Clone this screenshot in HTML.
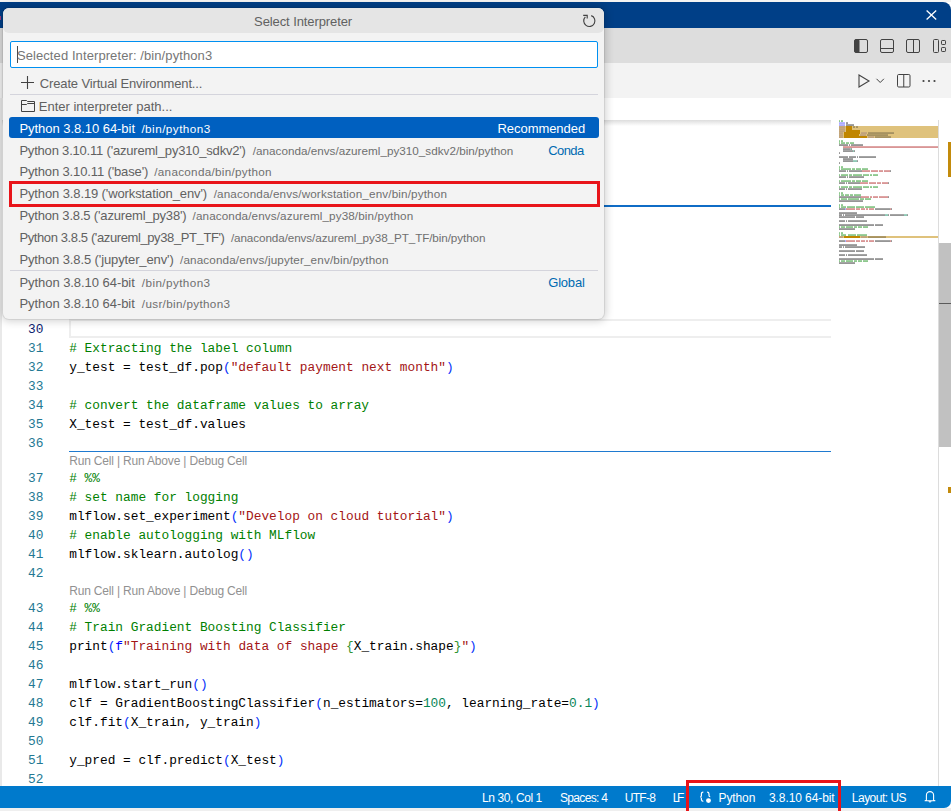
<!DOCTYPE html><html><head><meta charset='utf-8'><style>
*{margin:0;padding:0;box-sizing:border-box}
html,body{width:951px;height:811px;overflow:hidden;background:#ffffff;position:relative;font-family:"Liberation Sans",sans-serif}
.a{position:absolute}
.t{position:absolute;white-space:pre;font-family:"Liberation Sans",sans-serif}
.ln{position:absolute;font-family:"Liberation Mono",monospace;font-size:12.82px;line-height:19px;white-space:pre}
.code{position:absolute;left:69.2px;font-family:"Liberation Mono",monospace;font-size:12.82px;line-height:19px;white-space:pre;color:#000}
svg{position:absolute;overflow:visible}
</style></head><body><div class="a" style="left:0;top:0;width:951px;height:2px;background:#f4f3f2"></div>
<div class="a" style="left:0;top:2px;width:951px;height:26px;background:#003f87;border-top-right-radius:8px"></div>
<div class="a" style="left:0;top:16px;width:1px;height:4px;background:#a04080"></div>
<div class="a" style="left:0;top:28px;width:951px;height:35px;background:#dddddd"></div>
<div class="a" style="left:0;top:63px;width:951px;height:35px;background:#f3f3f3"></div>
<div class="a" style="left:0;top:98px;width:951px;height:22px;background:#ffffff"></div>
<div class="a" style="left:0;top:120px;width:831px;height:6px;background:linear-gradient(#dddddd,rgba(255,255,255,0))"></div>
<div class="a" style="left:0;top:98px;width:1.5px;height:688px;background:#e9e9e9"></div>
<div class="a" style="left:69px;top:319px;width:762px;height:19px;border:2px solid #eeeeee;border-right:0"></div>
<div class="a" style="left:69px;top:205px;width:762px;height:2px;background:#0f6cc6"></div>
<div class="a" style="left:69px;top:451px;width:762px;height:1px;background:#1f7ad0"></div>
<div class="ln" style="top:320px;left:28.02px;color:#0b216f">30</div>
<div class="ln" style="top:339px;left:28.02px;color:#237893">31</div>
<div class="code" style="top:339px"><span style="color:#008000"># Extracting the label column</span></div>
<div class="ln" style="top:358px;left:28.02px;color:#237893">32</div>
<div class="code" style="top:358px"><span style="color:#000000">y_test = test_df.pop</span><span style="color:#0431fa">(</span><span style="color:#a31515">&quot;default payment next month&quot;</span><span style="color:#0431fa">)</span></div>
<div class="ln" style="top:377px;left:28.02px;color:#237893">33</div>
<div class="ln" style="top:396px;left:28.02px;color:#237893">34</div>
<div class="code" style="top:396px"><span style="color:#008000"># convert the dataframe values to array</span></div>
<div class="ln" style="top:415px;left:28.02px;color:#237893">35</div>
<div class="code" style="top:415px"><span style="color:#000000">X_test = test_df.values</span></div>
<div class="ln" style="top:434px;left:28.02px;color:#237893">36</div>
<div class="ln" style="top:469px;left:28.02px;color:#237893">37</div>
<div class="code" style="top:469px"><span style="color:#008000"># %%</span></div>
<div class="ln" style="top:488px;left:28.02px;color:#237893">38</div>
<div class="code" style="top:488px"><span style="color:#008000"># set name for logging</span></div>
<div class="ln" style="top:507px;left:28.02px;color:#237893">39</div>
<div class="code" style="top:507px"><span style="color:#000000">mlflow.set_experiment</span><span style="color:#0431fa">(</span><span style="color:#a31515">&quot;Develop on cloud tutorial&quot;</span><span style="color:#0431fa">)</span></div>
<div class="ln" style="top:526px;left:28.02px;color:#237893">40</div>
<div class="code" style="top:526px"><span style="color:#008000"># enable autologging with MLflow</span></div>
<div class="ln" style="top:545px;left:28.02px;color:#237893">41</div>
<div class="code" style="top:545px"><span style="color:#000000">mlflow.sklearn.autolog</span><span style="color:#0431fa">()</span></div>
<div class="ln" style="top:564px;left:28.02px;color:#237893">42</div>
<div class="ln" style="top:599px;left:28.02px;color:#237893">43</div>
<div class="code" style="top:599px"><span style="color:#008000"># %%</span></div>
<div class="ln" style="top:618px;left:28.02px;color:#237893">44</div>
<div class="code" style="top:618px"><span style="color:#008000"># Train Gradient Boosting Classifier</span></div>
<div class="ln" style="top:637px;left:28.02px;color:#237893">45</div>
<div class="code" style="top:637px"><span style="color:#000000">print</span><span style="color:#0431fa">(</span><span style="color:#0000ff">f</span><span style="color:#a31515">&quot;Training with data of shape </span><span style="color:#319331">{</span><span style="color:#000000">X_train.shape</span><span style="color:#319331">}</span><span style="color:#a31515">&quot;</span><span style="color:#0431fa">)</span></div>
<div class="ln" style="top:656px;left:28.02px;color:#237893">46</div>
<div class="ln" style="top:675px;left:28.02px;color:#237893">47</div>
<div class="code" style="top:675px"><span style="color:#000000">mlflow.start_run</span><span style="color:#0431fa">()</span></div>
<div class="ln" style="top:694px;left:28.02px;color:#237893">48</div>
<div class="code" style="top:694px"><span style="color:#000000">clf = GradientBoostingClassifier</span><span style="color:#0431fa">(</span><span style="color:#000000">n_estimators=</span><span style="color:#098658">100</span><span style="color:#000000">, learning_rate=</span><span style="color:#098658">0.1</span><span style="color:#0431fa">)</span></div>
<div class="ln" style="top:713px;left:28.02px;color:#237893">49</div>
<div class="code" style="top:713px"><span style="color:#000000">clf.fit</span><span style="color:#0431fa">(</span><span style="color:#000000">X_train, y_train</span><span style="color:#0431fa">)</span></div>
<div class="ln" style="top:732px;left:28.02px;color:#237893">50</div>
<div class="ln" style="top:751px;left:28.02px;color:#237893">51</div>
<div class="code" style="top:751px"><span style="color:#000000">y_pred = clf.predict</span><span style="color:#0431fa">(</span><span style="color:#000000">X_test</span><span style="color:#0431fa">)</span></div>
<div class="ln" style="top:770px;left:28.02px;color:#237893">52</div>
<svg class="mm" width="951" height="811" viewBox="0 0 951 811" style="position:absolute;left:0;top:0"><rect x="839" y="126" width="99" height="2" fill="#dfc27c"/><rect x="839" y="128" width="99" height="2" fill="#dfc27c"/><rect x="839" y="130" width="99" height="2" fill="#dfc27c"/><rect x="839" y="132" width="99" height="2" fill="#dfc27c"/><rect x="839" y="134" width="99" height="2" fill="#dfc27c"/><rect x="839" y="136" width="99" height="2" fill="#dfc27c"/><rect x="839" y="236" width="99" height="2" fill="#dfc27c"/><rect x="839" y="120.45" width="1" height="1.2" fill="#108a10" opacity="0.72"/><rect x="841" y="120.45" width="2" height="1.2" fill="#108a10" opacity="0.72"/><rect x="839" y="122.45" width="6" height="1.2" fill="#5050ff" opacity="0.72"/><rect x="846" y="122.45" width="2" height="1.2" fill="#202020" opacity="0.72"/><rect x="839" y="124.45" width="6" height="1.2" fill="#5050ff" opacity="0.72"/><rect x="846" y="124.45" width="8" height="1.2" fill="#202020" opacity="0.72"/><rect x="839" y="126.45" width="6" height="1.2" fill="#7a5a7a" opacity="0.45"/><rect x="846" y="126" width="6" height="2" fill="#c08600"/><rect x="853" y="126.45" width="2" height="1.2" fill="#202020" opacity="0.45"/><rect x="856" y="126.45" width="2" height="1.2" fill="#202020" opacity="0.45"/><rect x="839" y="128.45" width="6" height="1.2" fill="#7a5a7a" opacity="0.45"/><rect x="846" y="128" width="6" height="2" fill="#c08600"/><rect x="839" y="130.45" width="6" height="1.2" fill="#7a5a7a" opacity="0.45"/><rect x="846" y="130" width="14" height="2" fill="#c08600"/><rect x="839" y="132.45" width="4" height="1.2" fill="#7a5a7a" opacity="0.45"/><rect x="844" y="132" width="16" height="2" fill="#c08600"/><rect x="861" y="132.45" width="6" height="1.2" fill="#7a5a7a" opacity="0.45"/><rect x="868" y="132.45" width="26" height="1.2" fill="#202020" opacity="0.45"/><rect x="839" y="134.45" width="4" height="1.2" fill="#7a5a7a" opacity="0.45"/><rect x="844" y="134" width="15" height="2" fill="#c08600"/><rect x="860" y="134.45" width="6" height="1.2" fill="#7a5a7a" opacity="0.45"/><rect x="867" y="134.45" width="21" height="1.2" fill="#202020" opacity="0.45"/><rect x="839" y="136.45" width="4" height="1.2" fill="#7a5a7a" opacity="0.45"/><rect x="844" y="136" width="23" height="2" fill="#c08600"/><rect x="868" y="136.45" width="6" height="1.2" fill="#7a5a7a" opacity="0.45"/><rect x="875" y="136.45" width="16" height="1.2" fill="#202020" opacity="0.45"/><rect x="839" y="140.45" width="1" height="1.2" fill="#108a10" opacity="0.72"/><rect x="841" y="140.45" width="2" height="1.2" fill="#108a10" opacity="0.72"/><rect x="839" y="142.45" width="1" height="1.2" fill="#108a10" opacity="0.72"/><rect x="841" y="142.45" width="4" height="1.2" fill="#108a10" opacity="0.72"/><rect x="846" y="142.45" width="3" height="1.2" fill="#108a10" opacity="0.72"/><rect x="850" y="142.45" width="4" height="1.2" fill="#108a10" opacity="0.72"/><rect x="839" y="144.45" width="9" height="1.2" fill="#202020" opacity="0.72"/><rect x="849" y="144.45" width="1" height="1.2" fill="#202020" opacity="0.72"/><rect x="851" y="144.45" width="12" height="1.2" fill="#202020" opacity="0.72"/><rect x="843" y="146.45" width="95" height="1.2" fill="#b02020" opacity="0.72"/><rect x="843" y="148.45" width="7" height="1.2" fill="#202020" opacity="0.72"/><rect x="850" y="148.45" width="1" height="1.2" fill="#108a60" opacity="0.72"/><rect x="851" y="148.45" width="1" height="1.2" fill="#202020" opacity="0.72"/><rect x="843" y="150.45" width="10" height="1.2" fill="#202020" opacity="0.72"/><rect x="853" y="150.45" width="1" height="1.2" fill="#108a60" opacity="0.72"/><rect x="854" y="150.45" width="1" height="1.2" fill="#202020" opacity="0.72"/><rect x="839" y="152.45" width="1" height="1.2" fill="#202020" opacity="0.72"/><rect x="839" y="156.45" width="9" height="1.2" fill="#202020" opacity="0.72"/><rect x="849" y="156.45" width="7" height="1.2" fill="#202020" opacity="0.72"/><rect x="857" y="156.45" width="1" height="1.2" fill="#202020" opacity="0.72"/><rect x="859" y="156.45" width="17" height="1.2" fill="#202020" opacity="0.72"/><rect x="843" y="158.45" width="10" height="1.2" fill="#202020" opacity="0.72"/><rect x="843" y="160.45" width="10" height="1.2" fill="#202020" opacity="0.72"/><rect x="853" y="160.45" width="4" height="1.2" fill="#108a60" opacity="0.72"/><rect x="857" y="160.45" width="1" height="1.2" fill="#202020" opacity="0.72"/><rect x="839" y="162.45" width="1" height="1.2" fill="#202020" opacity="0.72"/><rect x="839" y="166.45" width="1" height="1.2" fill="#108a10" opacity="0.72"/><rect x="841" y="166.45" width="2" height="1.2" fill="#108a10" opacity="0.72"/><rect x="839" y="168.45" width="1" height="1.2" fill="#108a10" opacity="0.72"/><rect x="841" y="168.45" width="10" height="1.2" fill="#108a10" opacity="0.72"/><rect x="852" y="168.45" width="3" height="1.2" fill="#108a10" opacity="0.72"/><rect x="856" y="168.45" width="5" height="1.2" fill="#108a10" opacity="0.72"/><rect x="862" y="168.45" width="6" height="1.2" fill="#108a10" opacity="0.72"/><rect x="839" y="170.45" width="7" height="1.2" fill="#202020" opacity="0.72"/><rect x="847" y="170.45" width="1" height="1.2" fill="#202020" opacity="0.72"/><rect x="849" y="170.45" width="13" height="1.2" fill="#202020" opacity="0.72"/><rect x="862" y="170.45" width="8" height="1.2" fill="#b02020" opacity="0.72"/><rect x="871" y="170.45" width="7" height="1.2" fill="#b02020" opacity="0.72"/><rect x="879" y="170.45" width="4" height="1.2" fill="#b02020" opacity="0.72"/><rect x="884" y="170.45" width="6" height="1.2" fill="#b02020" opacity="0.72"/><rect x="890" y="170.45" width="1" height="1.2" fill="#202020" opacity="0.72"/><rect x="839" y="174.45" width="1" height="1.2" fill="#108a10" opacity="0.72"/><rect x="841" y="174.45" width="7" height="1.2" fill="#108a10" opacity="0.72"/><rect x="849" y="174.45" width="3" height="1.2" fill="#108a10" opacity="0.72"/><rect x="853" y="174.45" width="9" height="1.2" fill="#108a10" opacity="0.72"/><rect x="863" y="174.45" width="6" height="1.2" fill="#108a10" opacity="0.72"/><rect x="870" y="174.45" width="2" height="1.2" fill="#108a10" opacity="0.72"/><rect x="873" y="174.45" width="5" height="1.2" fill="#108a10" opacity="0.72"/><rect x="839" y="176.45" width="7" height="1.2" fill="#202020" opacity="0.72"/><rect x="847" y="176.45" width="1" height="1.2" fill="#202020" opacity="0.72"/><rect x="849" y="176.45" width="15" height="1.2" fill="#202020" opacity="0.72"/><rect x="839" y="224.45" width="35" height="1.2" fill="#202020" opacity="0.72"/><rect x="875" y="224.45" width="8" height="1.2" fill="#202020" opacity="0.72"/><rect x="839" y="226.45" width="1" height="1.2" fill="#108a10" opacity="0.72"/><rect x="841" y="226.45" width="4" height="1.2" fill="#108a10" opacity="0.72"/><rect x="846" y="226.45" width="7" height="1.2" fill="#108a10" opacity="0.72"/><rect x="854" y="226.45" width="3" height="1.2" fill="#108a10" opacity="0.72"/><rect x="858" y="226.45" width="4" height="1.2" fill="#108a10" opacity="0.72"/><rect x="863" y="226.45" width="5" height="1.2" fill="#108a10" opacity="0.72"/><rect x="839" y="228.45" width="16" height="1.2" fill="#202020" opacity="0.72"/><rect x="839" y="232.45" width="1" height="1.2" fill="#108a10" opacity="0.72"/><rect x="841" y="232.45" width="2" height="1.2" fill="#108a10" opacity="0.72"/><rect x="839" y="234.45" width="1" height="1.2" fill="#108a10" opacity="0.72"/><rect x="841" y="234.45" width="5" height="1.2" fill="#108a10" opacity="0.72"/><rect x="848" y="234.45" width="8" height="1.2" fill="#108a10" opacity="0.72"/><rect x="857" y="234.45" width="10" height="1.2" fill="#108a10" opacity="0.72"/><rect x="839" y="236.45" width="4" height="1.2" fill="#7a5a7a" opacity="0.45"/><rect x="844" y="236" width="16" height="2" fill="#c08600"/><rect x="861" y="236.45" width="6" height="1.2" fill="#7a5a7a" opacity="0.45"/><rect x="868" y="236.45" width="18" height="1.2" fill="#202020" opacity="0.45"/><rect x="839" y="240.45" width="6" height="1.2" fill="#202020" opacity="0.72"/><rect x="845" y="240.45" width="1" height="1.2" fill="#5050ff" opacity="0.72"/><rect x="846" y="240.45" width="9" height="1.2" fill="#b02020" opacity="0.72"/><rect x="856" y="240.45" width="4" height="1.2" fill="#b02020" opacity="0.72"/><rect x="861" y="240.45" width="4" height="1.2" fill="#b02020" opacity="0.72"/><rect x="866" y="240.45" width="2" height="1.2" fill="#b02020" opacity="0.72"/><rect x="869" y="240.45" width="5" height="1.2" fill="#b02020" opacity="0.72"/><rect x="875" y="240.45" width="15" height="1.2" fill="#202020" opacity="0.72"/><rect x="890" y="240.45" width="1" height="1.2" fill="#b02020" opacity="0.72"/><rect x="891" y="240.45" width="1" height="1.2" fill="#202020" opacity="0.72"/><rect x="839" y="244.45" width="18" height="1.2" fill="#202020" opacity="0.72"/><rect x="839" y="246.45" width="3" height="1.2" fill="#202020" opacity="0.72"/><rect x="843" y="246.45" width="1" height="1.2" fill="#202020" opacity="0.72"/><rect x="845" y="246.45" width="20" height="1.2" fill="#202020" opacity="0.72"/><rect x="839" y="250.45" width="16" height="1.2" fill="#202020" opacity="0.72"/><rect x="856" y="250.45" width="8" height="1.2" fill="#202020" opacity="0.72"/><rect x="839" y="254.45" width="6" height="1.2" fill="#202020" opacity="0.72"/><rect x="846" y="254.45" width="1" height="1.2" fill="#202020" opacity="0.72"/><rect x="848" y="254.45" width="19" height="1.2" fill="#202020" opacity="0.72"/><rect x="839" y="258.45" width="35" height="1.2" fill="#202020" opacity="0.72"/><rect x="875" y="258.45" width="8" height="1.2" fill="#202020" opacity="0.72"/><rect x="839" y="260.45" width="1" height="1.2" fill="#108a10" opacity="0.72"/><rect x="841" y="260.45" width="4" height="1.2" fill="#108a10" opacity="0.72"/><rect x="846" y="260.45" width="7" height="1.2" fill="#108a10" opacity="0.72"/><rect x="854" y="260.45" width="3" height="1.2" fill="#108a10" opacity="0.72"/><rect x="858" y="260.45" width="4" height="1.2" fill="#108a10" opacity="0.72"/><rect x="863" y="260.45" width="5" height="1.2" fill="#108a10" opacity="0.72"/><rect x="839" y="262.45" width="16" height="1.2" fill="#202020" opacity="0.72"/><rect x="839" y="180.45" width="1" height="1.2" fill="#108a10" opacity="0.72"/><rect x="841" y="180.45" width="10" height="1.2" fill="#108a10" opacity="0.72"/><rect x="852" y="180.45" width="3" height="1.2" fill="#108a10" opacity="0.72"/><rect x="856" y="180.45" width="5" height="1.2" fill="#108a10" opacity="0.72"/><rect x="862" y="180.45" width="6" height="1.2" fill="#108a10" opacity="0.72"/><rect x="839" y="182.45" width="6" height="1.2" fill="#202020" opacity="0.72"/><rect x="846" y="182.45" width="1" height="1.2" fill="#202020" opacity="0.72"/><rect x="848" y="182.45" width="11" height="1.2" fill="#202020" opacity="0.72"/><rect x="859" y="182.45" width="1" height="1.2" fill="#202020" opacity="0.72"/><rect x="860" y="182.45" width="8" height="1.2" fill="#b02020" opacity="0.72"/><rect x="869" y="182.45" width="7" height="1.2" fill="#b02020" opacity="0.72"/><rect x="877" y="182.45" width="4" height="1.2" fill="#b02020" opacity="0.72"/><rect x="882" y="182.45" width="6" height="1.2" fill="#b02020" opacity="0.72"/><rect x="888" y="182.45" width="1" height="1.2" fill="#202020" opacity="0.72"/><rect x="839" y="186.45" width="1" height="1.2" fill="#108a10" opacity="0.72"/><rect x="841" y="186.45" width="7" height="1.2" fill="#108a10" opacity="0.72"/><rect x="849" y="186.45" width="3" height="1.2" fill="#108a10" opacity="0.72"/><rect x="853" y="186.45" width="9" height="1.2" fill="#108a10" opacity="0.72"/><rect x="863" y="186.45" width="6" height="1.2" fill="#108a10" opacity="0.72"/><rect x="870" y="186.45" width="2" height="1.2" fill="#108a10" opacity="0.72"/><rect x="873" y="186.45" width="5" height="1.2" fill="#108a10" opacity="0.72"/><rect x="839" y="188.45" width="6" height="1.2" fill="#202020" opacity="0.72"/><rect x="846" y="188.45" width="1" height="1.2" fill="#202020" opacity="0.72"/><rect x="848" y="188.45" width="14" height="1.2" fill="#202020" opacity="0.72"/><rect x="839" y="192.45" width="1" height="1.2" fill="#108a10" opacity="0.72"/><rect x="841" y="192.45" width="2" height="1.2" fill="#108a10" opacity="0.72"/><rect x="839" y="194.45" width="1" height="1.2" fill="#108a10" opacity="0.72"/><rect x="841" y="194.45" width="3" height="1.2" fill="#108a10" opacity="0.72"/><rect x="845" y="194.45" width="4" height="1.2" fill="#108a10" opacity="0.72"/><rect x="850" y="194.45" width="3" height="1.2" fill="#108a10" opacity="0.72"/><rect x="854" y="194.45" width="7" height="1.2" fill="#108a10" opacity="0.72"/><rect x="839" y="196.45" width="21" height="1.2" fill="#202020" opacity="0.72"/><rect x="860" y="196.45" width="1" height="1.2" fill="#202020" opacity="0.72"/><rect x="861" y="196.45" width="8" height="1.2" fill="#b02020" opacity="0.72"/><rect x="870" y="196.45" width="2" height="1.2" fill="#b02020" opacity="0.72"/><rect x="873" y="196.45" width="5" height="1.2" fill="#b02020" opacity="0.72"/><rect x="879" y="196.45" width="9" height="1.2" fill="#b02020" opacity="0.72"/><rect x="888" y="196.45" width="1" height="1.2" fill="#202020" opacity="0.72"/><rect x="839" y="198.45" width="1" height="1.2" fill="#108a10" opacity="0.72"/><rect x="841" y="198.45" width="6" height="1.2" fill="#108a10" opacity="0.72"/><rect x="848" y="198.45" width="11" height="1.2" fill="#108a10" opacity="0.72"/><rect x="860" y="198.45" width="4" height="1.2" fill="#108a10" opacity="0.72"/><rect x="865" y="198.45" width="6" height="1.2" fill="#108a10" opacity="0.72"/><rect x="839" y="200.45" width="22" height="1.2" fill="#202020" opacity="0.72"/><rect x="861" y="200.45" width="2" height="1.2" fill="#202020" opacity="0.72"/><rect x="839" y="204.45" width="1" height="1.2" fill="#108a10" opacity="0.72"/><rect x="841" y="204.45" width="2" height="1.2" fill="#108a10" opacity="0.72"/><rect x="839" y="206.45" width="1" height="1.2" fill="#108a10" opacity="0.72"/><rect x="841" y="206.45" width="5" height="1.2" fill="#108a10" opacity="0.72"/><rect x="847" y="206.45" width="8" height="1.2" fill="#108a10" opacity="0.72"/><rect x="856" y="206.45" width="8" height="1.2" fill="#108a10" opacity="0.72"/><rect x="865" y="206.45" width="10" height="1.2" fill="#108a10" opacity="0.72"/><rect x="839" y="208.45" width="5" height="1.2" fill="#202020" opacity="0.72"/><rect x="844" y="208.45" width="1" height="1.2" fill="#202020" opacity="0.72"/><rect x="845" y="208.45" width="1" height="1.2" fill="#5050ff" opacity="0.72"/><rect x="846" y="208.45" width="9" height="1.2" fill="#b02020" opacity="0.72"/><rect x="856" y="208.45" width="4" height="1.2" fill="#b02020" opacity="0.72"/><rect x="861" y="208.45" width="4" height="1.2" fill="#b02020" opacity="0.72"/><rect x="866" y="208.45" width="2" height="1.2" fill="#b02020" opacity="0.72"/><rect x="869" y="208.45" width="5" height="1.2" fill="#b02020" opacity="0.72"/><rect x="875" y="208.45" width="1" height="1.2" fill="#202020" opacity="0.72"/><rect x="876" y="208.45" width="13" height="1.2" fill="#202020" opacity="0.72"/><rect x="889" y="208.45" width="1" height="1.2" fill="#202020" opacity="0.72"/><rect x="890" y="208.45" width="1" height="1.2" fill="#b02020" opacity="0.72"/><rect x="891" y="208.45" width="1" height="1.2" fill="#202020" opacity="0.72"/><rect x="839" y="212.45" width="16" height="1.2" fill="#202020" opacity="0.72"/><rect x="855" y="212.45" width="2" height="1.2" fill="#202020" opacity="0.72"/><rect x="839" y="214.45" width="3" height="1.2" fill="#202020" opacity="0.72"/><rect x="843" y="214.45" width="1" height="1.2" fill="#202020" opacity="0.72"/><rect x="845" y="214.45" width="26" height="1.2" fill="#202020" opacity="0.72"/><rect x="871" y="214.45" width="1" height="1.2" fill="#202020" opacity="0.72"/><rect x="872" y="214.45" width="13" height="1.2" fill="#202020" opacity="0.72"/><rect x="885" y="214.45" width="3" height="1.2" fill="#108a60" opacity="0.72"/><rect x="888" y="214.45" width="1" height="1.2" fill="#202020" opacity="0.72"/><rect x="890" y="214.45" width="14" height="1.2" fill="#202020" opacity="0.72"/><rect x="904" y="214.45" width="3" height="1.2" fill="#108a60" opacity="0.72"/><rect x="907" y="214.45" width="1" height="1.2" fill="#202020" opacity="0.72"/><rect x="839" y="216.45" width="7" height="1.2" fill="#202020" opacity="0.72"/><rect x="846" y="216.45" width="1" height="1.2" fill="#202020" opacity="0.72"/><rect x="847" y="216.45" width="8" height="1.2" fill="#202020" opacity="0.72"/><rect x="856" y="216.45" width="7" height="1.2" fill="#202020" opacity="0.72"/><rect x="863" y="216.45" width="1" height="1.2" fill="#202020" opacity="0.72"/><rect x="839" y="220.45" width="6" height="1.2" fill="#202020" opacity="0.72"/><rect x="846" y="220.45" width="1" height="1.2" fill="#202020" opacity="0.72"/><rect x="848" y="220.45" width="11" height="1.2" fill="#202020" opacity="0.72"/><rect x="859" y="220.45" width="1" height="1.2" fill="#202020" opacity="0.72"/><rect x="860" y="220.45" width="6" height="1.2" fill="#202020" opacity="0.72"/><rect x="866" y="220.45" width="1" height="1.2" fill="#202020" opacity="0.72"/></svg>
<div class="a" style="left:938px;top:120px;width:1px;height:666px;background:#dcdcdc"></div>
<div class="a" style="left:939px;top:243px;width:12px;height:204px;background:#c1c1c1"></div>
<div class="a" style="left:939px;top:302.5px;width:12px;height:1.8px;background:#5a5a5a"></div>
<div class="a" style="left:948px;top:142px;width:3px;height:35px;background:#c38b0c"></div>
<div class="a" style="left:948px;top:487px;width:3px;height:6px;background:#c38b0c"></div>
<div class="a" style="left:0;top:808px;width:951px;height:3px;background:#efefef"></div>
<div class="a" style="left:0;top:786px;width:951px;height:22px;background:#007acc;border-bottom-right-radius:7px"></div>
<svg class="a" style="left:926px;top:10px" width="11" height="10" viewBox="0 0 11 10"><path d="M0.6 0.6L10.2 9.4M10.2 0.6L0.6 9.4" stroke="#fff" stroke-width="1.3" fill="none"/></svg>
<svg style="left:854px;top:39px" width="14" height="14" viewBox="0 0 14 14"><rect x="0.5" y="0.5" width="13" height="13" rx="1.5" fill="none" stroke="#424242"/><rect x="0.5" y="0.5" width="5" height="13" rx="1.2" fill="#424242"/></svg>
<svg style="left:880px;top:39px" width="14" height="14" viewBox="0 0 14 14"><rect x="0.5" y="0.5" width="13" height="13" rx="1.5" fill="none" stroke="#424242"/><path d="M1 9.5H13" stroke="#424242"/></svg>
<svg style="left:906px;top:39px" width="14" height="14" viewBox="0 0 14 14"><rect x="0.5" y="0.5" width="13" height="13" rx="1.5" fill="none" stroke="#424242"/><path d="M7.5 1V13" stroke="#424242"/></svg>
<svg style="left:932px;top:39px" width="15" height="14" viewBox="0 0 15 14"><rect x="1.5" y="0.5" width="5" height="13" rx="1" fill="none" stroke="#424242"/><rect x="9.5" y="1.5" width="4" height="4" rx="0.7" fill="none" stroke="#424242"/><rect x="9.5" y="8.5" width="4" height="4" rx="0.7" fill="none" stroke="#424242"/></svg>
<svg style="left:858px;top:74px" width="12" height="14" viewBox="0 0 12 14"><path d="M1 1L11 7L1 13Z" fill="none" stroke="#424242" stroke-width="1.1" stroke-linejoin="miter"/></svg>
<svg style="left:876px;top:78px" width="9" height="6" viewBox="0 0 9 6"><path d="M0.5 0.8L4.2 4.5L7.9 0.8" fill="none" stroke="#424242" stroke-width="1"/></svg>
<svg style="left:897px;top:74px" width="14" height="14" viewBox="0 0 14 14"><rect x="0.5" y="0.5" width="12.5" height="12.5" rx="1.2" fill="none" stroke="#424242"/><path d="M6.75 1V13" stroke="#424242"/></svg>
<svg style="left:922px;top:79px" width="14" height="4" viewBox="0 0 14 4"><circle cx="1.5" cy="2" r="1.1" fill="#424242"/><circle cx="7" cy="2" r="1.1" fill="#424242"/><circle cx="12.5" cy="2" r="1.1" fill="#424242"/></svg>
<svg style="left:699px;top:791px" width="13" height="13" viewBox="0 0 13 13"><path d="M4.3 1.2C2.7 1.2 2.4 2 2.4 3V4.6C2.4 5.5 2 6 1.2 6C2 6 2.4 6.5 2.4 7.4V8.6C2.4 9.6 2.7 10.3 4.3 10.3" fill="none" stroke="#fff" stroke-width="1.2"/><path d="M8.1 1.2C9.7 1.2 10 2 10 3V4.4C10 5.2 10.4 5.6 11.2 5.6" fill="none" stroke="#fff" stroke-width="1.2"/><circle cx="9.5" cy="9.6" r="2.45" fill="#fff"/></svg>
<svg style="left:921px;top:787px" width="18" height="18" viewBox="0 0 18 18"><path d="M5.4 13.2V8.2A3.6 3.6 0 0 1 12.6 8.2V13.2L13.9 13.8H4.1Z" fill="none" stroke="#fff" stroke-width="1.1" stroke-linejoin="round"/><path d="M7.9 14.3A1.2 1.2 0 0 0 10.1 14.3" fill="none" stroke="#fff" stroke-width="1.1"/></svg>
<div class="a" style="left:3px;top:8px;width:601px;height:311px;background:#f3f3f3;border-radius:6px;box-shadow:0 0 0 1px rgba(0,0,0,0.07),0 0 8px 2px rgba(0,0,0,0.19)"></div>
<div class="a" style="left:3px;top:8px;width:601px;height:25px;background:#e5e5e5;border-radius:6px"></div>
<div class="a" style="left:10px;top:41px;width:588px;height:27px;background:#ffffff;border:1px solid #0090f1;border-radius:2px"></div>
<div class="a" style="left:17px;top:46px;width:1px;height:17px;background:#4a4a4a"></div>
<div class="a" style="left:10px;top:94px;width:588px;height:1px;background:#d4d4dc"></div>
<div class="a" style="left:10px;top:270px;width:588px;height:1px;background:#d4d4dc"></div>
<div class="a" style="left:9px;top:117px;width:590px;height:21px;background:#0060c0;border-radius:3px"></div>
<svg style="left:580px;top:12px" width="18" height="18" viewBox="0 0 18 18"><path d="M11.2 3.6A5.6 5.6 0 1 1 5.34 4.94" fill="none" stroke="#424242" stroke-width="1.15"/><path d="M3.2 3.4H7.2V6.6" fill="none" stroke="#424242" stroke-width="1.15"/></svg>
<svg style="left:21px;top:76px" width="13" height="13" viewBox="0 0 13 13"><path d="M6.5 0V13M0 6.5H13" stroke="#424242" stroke-width="1.1"/></svg>
<svg style="left:21px;top:100px" width="14" height="12" viewBox="0 0 14 12"><path d="M0.5 0.5H5.5L6.5 1.5H13.5V11.5H0.5Z" fill="none" stroke="#424242" stroke-width="1"/><path d="M0.5 4.5H5.5L6.5 3.5H13.5" fill="none" stroke="#424242" stroke-width="1"/></svg>
<div class="t" style="left:254.10px;top:13.00px;font-size:13px;line-height:18px;color:#616161;letter-spacing:-0.099px">Select Interpreter</div>
<div class="t" style="left:16.90px;top:47.00px;font-size:13px;line-height:18px;color:#767676;letter-spacing:0.091px">Selected Interpreter: /bin/python3</div>
<div class="t" style="left:39.80px;top:75.00px;font-size:13px;line-height:18px;color:#616161;letter-spacing:-0.145px">Create Virtual Environment...</div>
<div class="t" style="left:38.80px;top:98.00px;font-size:13px;line-height:18px;color:#616161;letter-spacing:-0.003px">Enter interpreter path...</div>
<div class="t" style="left:19.40px;top:120.00px;font-size:13px;line-height:18px;color:#ffffff;letter-spacing:-0.039px">Python 3.8.10 64-bit</div>
<div class="t" style="left:141.40px;top:120.00px;font-size:11.7px;line-height:18px;color:#ffffff;letter-spacing:0.474px">/bin/python3</div>
<div class="t" style="left:497.50px;top:120.00px;font-size:13px;line-height:18px;color:#ffffff;letter-spacing:-0.053px">Recommended</div>
<div class="t" style="left:19.40px;top:142.00px;font-size:13px;line-height:18px;color:#616161;letter-spacing:-0.197px">Python 3.10.11 (&#x27;azureml_py310_sdkv2&#x27;)</div>
<div class="t" style="left:252.80px;top:142.00px;font-size:11.7px;line-height:18px;color:#6f6f6f;letter-spacing:0.011px">/anaconda/envs/azureml_py310_sdkv2/bin/python</div>
<div class="t" style="left:548.30px;top:142.00px;font-size:13px;line-height:18px;color:#006ab1;letter-spacing:-0.620px">Conda</div>
<div class="t" style="left:19.40px;top:163.00px;font-size:13px;line-height:18px;color:#616161;letter-spacing:-0.136px">Python 3.10.11 (&#x27;base&#x27;)</div>
<div class="t" style="left:154.30px;top:163.00px;font-size:11.7px;line-height:18px;color:#6f6f6f;letter-spacing:0.286px">/anaconda/bin/python</div>
<div class="t" style="left:19.40px;top:185.00px;font-size:13px;line-height:18px;color:#616161;letter-spacing:-0.115px">Python 3.8.19 (&#x27;workstation_env&#x27;)</div>
<div class="t" style="left:213.70px;top:185.00px;font-size:11.7px;line-height:18px;color:#6f6f6f;letter-spacing:0.145px">/anaconda/envs/workstation_env/bin/python</div>
<div class="t" style="left:19.40px;top:207.00px;font-size:13px;line-height:18px;color:#616161;letter-spacing:-0.166px">Python 3.8.5 (&#x27;azureml_py38&#x27;)</div>
<div class="t" style="left:192.60px;top:207.00px;font-size:11.7px;line-height:18px;color:#6f6f6f;letter-spacing:0.114px">/anaconda/envs/azureml_py38/bin/python</div>
<div class="t" style="left:19.40px;top:229.00px;font-size:13px;line-height:18px;color:#616161;letter-spacing:-0.392px">Python 3.8.5 (&#x27;azureml_py38_PT_TF&#x27;)</div>
<div class="t" style="left:230.90px;top:229.00px;font-size:11.7px;line-height:18px;color:#6f6f6f;letter-spacing:-0.093px">/anaconda/envs/azureml_py38_PT_TF/bin/python</div>
<div class="t" style="left:19.40px;top:251.00px;font-size:13px;line-height:18px;color:#616161;letter-spacing:-0.112px">Python 3.8.5 (&#x27;jupyter_env&#x27;)</div>
<div class="t" style="left:180.00px;top:251.00px;font-size:11.7px;line-height:18px;color:#6f6f6f;letter-spacing:0.142px">/anaconda/envs/jupyter_env/bin/python</div>
<div class="t" style="left:19.40px;top:274.00px;font-size:13px;line-height:18px;color:#616161;letter-spacing:-0.050px">Python 3.8.10 64-bit</div>
<div class="t" style="left:141.80px;top:274.00px;font-size:11.7px;line-height:18px;color:#6f6f6f;letter-spacing:0.420px">/bin/python3</div>
<div class="t" style="left:548.30px;top:274.00px;font-size:13px;line-height:18px;color:#006ab1;letter-spacing:-0.218px">Global</div>
<div class="t" style="left:19.40px;top:295.00px;font-size:13px;line-height:18px;color:#616161;letter-spacing:-0.050px">Python 3.8.10 64-bit</div>
<div class="t" style="left:141.80px;top:295.00px;font-size:11.7px;line-height:18px;color:#6f6f6f;letter-spacing:0.336px">/usr/bin/python3</div>
<div class="t" style="left:69.20px;top:452.00px;font-size:12px;line-height:18px;color:#919191;letter-spacing:-0.177px">Run Cell | Run Above | Debug Cell</div>
<div class="t" style="left:69.20px;top:582.00px;font-size:12px;line-height:18px;color:#919191;letter-spacing:-0.177px">Run Cell | Run Above | Debug Cell</div>
<div class="t" style="left:482.00px;top:789.00px;font-size:12px;line-height:18px;color:#ffffff;letter-spacing:-0.403px">Ln 30, Col 1</div>
<div class="t" style="left:560.00px;top:789.00px;font-size:12px;line-height:18px;color:#ffffff;letter-spacing:-0.674px">Spaces: 4</div>
<div class="t" style="left:624.80px;top:789.00px;font-size:12px;line-height:18px;color:#ffffff;letter-spacing:-0.731px">UTF-8</div>
<div class="t" style="left:672.70px;top:789.00px;font-size:12px;line-height:18px;color:#ffffff;letter-spacing:-2.374px">LF</div>
<div class="t" style="left:718.50px;top:789.00px;font-size:12px;line-height:18px;color:#ffffff;letter-spacing:-0.097px">Python</div>
<div class="t" style="left:769.00px;top:789.00px;font-size:12px;line-height:18px;color:#ffffff;letter-spacing:-0.090px">3.8.10 64-bit</div>
<div class="t" style="left:851.80px;top:789.00px;font-size:12px;line-height:18px;color:#ffffff;letter-spacing:-0.507px">Layout: US</div>
<div class="a" style="left:9px;top:181px;width:591px;height:26px;border:3px solid #e8141a"></div>
<div class="a" style="left:686px;top:780px;width:155px;height:34px;border:3px solid #e8141a"></div></body></html>
